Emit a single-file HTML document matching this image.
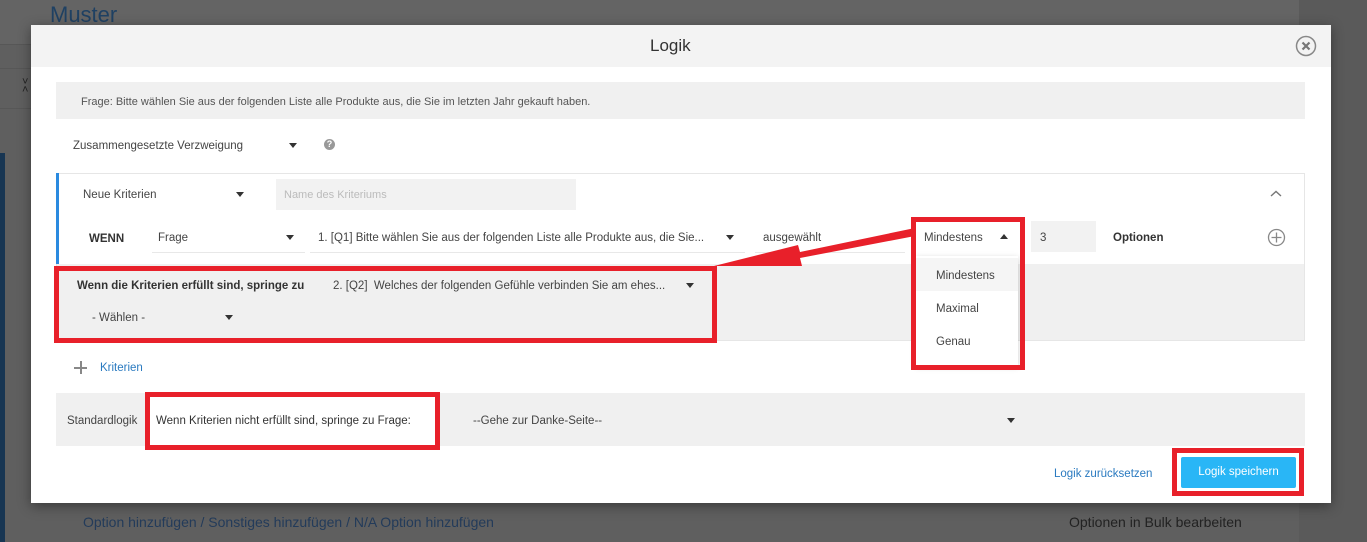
<!DOCTYPE html>
<html><head><meta charset="utf-8">
<style>
*{margin:0;padding:0;box-sizing:border-box}
body{width:1367px;height:542px;overflow:hidden;background:#5f5f5f;position:relative;font-family:"Liberation Sans",sans-serif;font-size:11.5px;color:#444}
.a{position:absolute;white-space:nowrap}
.t{line-height:14px;transform:translateY(-6px)}
.car{position:absolute;width:0;height:0;border-left:4px solid transparent;border-right:4px solid transparent;border-top:5px solid #333}
.rb{position:absolute;border:5px solid #e8202a}
b{font-weight:bold;color:#333}
</style></head><body>
<!-- background page -->
<div class="a" style="left:0;top:0;width:1299px;height:44px;background:#646464"></div>
<div class="a" style="left:0;top:44px;width:1299px;height:1px;background:#575757"></div>
<div class="a" style="left:0;top:68px;width:1299px;height:1px;background:#575757"></div>
<div class="a" style="left:0;top:108px;width:1299px;height:1px;background:#575757"></div>
<div class="a" style="left:1299px;top:0;width:68px;height:542px;background:#5a5a5a"></div>
<div class="a" style="left:0;top:153px;width:5px;height:389px;background:#173552"></div>
<div class="a" style="left:50px;top:2px;font-size:22px;color:#1f4163">Muster</div>
<div class="a" style="left:22px;top:78px;font-size:11px;color:#222;line-height:8px">˅<br>˄</div>
<div class="a t" style="left:83px;top:521px;font-size:14px;color:#233b5a">Option hinzufügen / Sonstiges hinzufügen / N/A Option hinzufügen</div>
<div class="a t" style="left:1069px;top:521px;font-size:14px;color:#222">Optionen in Bulk bearbeiten</div>

<!-- modal -->
<div class="a" style="left:31px;top:25px;width:1300px;height:478px;background:#fff;box-shadow:0 3px 12px rgba(0,0,0,.4)"></div>
<div class="a" style="left:31px;top:25px;width:1300px;height:42px;background:#f3f3f3"></div>
<div class="a t" style="left:650px;top:46px;font-size:17px;color:#333;line-height:20px;transform:translateY(-10px)">Logik</div>
<svg class="a" style="left:1295px;top:35px" width="22" height="22" viewBox="0 0 22 22"><circle cx="11" cy="11" r="9.5" fill="none" stroke="#888" stroke-width="1.5"/><path d="M7.5 7.5l7 7M14.5 7.5l-7 7" stroke="#777" stroke-width="2.2"/></svg>

<div class="a" style="left:56px;top:82px;width:1249px;height:37px;background:#f0f0f0"></div>
<div class="a t" style="left:81px;top:101px;color:#555;font-size:11px">Frage: Bitte wählen Sie aus der folgenden Liste alle Produkte aus, die Sie im letzten Jahr gekauft haben.</div>

<div class="a t" style="left:73px;top:145px">Zusammengesetzte Verzweigung</div>
<div class="car" style="left:289px;top:143px"></div>
<div class="a" style="left:324px;top:139px;width:11px;height:11px;border-radius:50%;background:#999;color:#fff;font-size:9px;font-weight:bold;text-align:center;line-height:11px">?</div>

<!-- criteria box -->
<div class="a" style="left:56px;top:173px;width:1249px;height:168px;border:1px solid #e6e6e6"></div>
<div class="a" style="left:56px;top:173px;width:3px;height:91px;background:#2a8ae0"></div>
<div class="a t" style="left:83px;top:194px">Neue Kriterien</div>
<div class="car" style="left:236px;top:192px"></div>
<div class="a" style="left:276px;top:179px;width:300px;height:31px;background:#f2f2f2"></div>
<div class="a t" style="left:284px;top:194px;color:#bbb;font-size:11px">Name des Kriteriums</div>
<svg class="a" style="left:1270px;top:190px" width="12" height="8"><path d="M1 6l5-4.5 5 4.5" fill="none" stroke="#777" stroke-width="1.4"/></svg>

<div class="a t" style="left:89px;top:238px"><b>WENN</b></div>
<div class="a t" style="left:158px;top:237px">Frage</div>
<div class="car" style="left:286px;top:235px"></div>
<div class="a" style="left:152px;top:252px;width:153px;height:1px;background:#e8e8e8"></div>
<div class="a t" style="left:318px;top:237px">1. [Q1] Bitte wählen Sie aus der folgenden Liste alle Produkte aus, die Sie...</div>
<div class="car" style="left:726px;top:235px"></div>
<div class="a" style="left:310px;top:252px;width:435px;height:1px;background:#e8e8e8"></div>
<div class="a t" style="left:763px;top:237px">ausgewählt</div>
<div class="a" style="left:755px;top:252px;width:150px;height:1px;background:#e8e8e8"></div>
<div class="a t" style="left:924px;top:237px">Mindestens</div>
<div class="car" style="left:1000px;top:234px;border-top:0;border-bottom:5px solid #333"></div>
<div class="a" style="left:1031px;top:221px;width:65px;height:31px;background:#f2f2f2"></div>
<div class="a t" style="left:1040px;top:237px">3</div>
<div class="a t" style="left:1113px;top:237px"><b>Optionen</b></div>
<svg class="a" style="left:1267px;top:228px" width="19" height="19"><circle cx="9.5" cy="9.5" r="8" fill="none" stroke="#888" stroke-width="1.3"/><path d="M9.5 4.5v10M4.5 9.5h10" stroke="#888" stroke-width="1.3"/></svg>

<div class="a" style="left:57px;top:264px;width:1247px;height:76px;background:#f0f0f0"></div>
<div class="a t" style="left:77px;top:285px"><b>Wenn die Kriterien erfüllt sind, springe zu</b></div>
<div class="a t" style="left:333px;top:285px">2. [Q2]&nbsp; Welches der folgenden Gefühle verbinden Sie am ehes...</div>
<div class="car" style="left:686px;top:283px"></div>
<div class="a t" style="left:92px;top:317px">- Wählen -</div>
<div class="car" style="left:225px;top:315px"></div>
<div class="rb" style="left:54px;top:266px;width:663px;height:77px"></div>

<!-- dropdown -->
<div class="a" style="left:916px;top:256px;width:102px;height:109px;background:#fff;box-shadow:0 2px 6px rgba(0,0,0,.2)"></div>
<div class="a" style="left:916px;top:258px;width:102px;height:33px;background:#f5f5f5"></div>
<div class="a t" style="left:936px;top:275px">Mindestens</div>
<div class="a t" style="left:936px;top:308px">Maximal</div>
<div class="a t" style="left:936px;top:341px">Genau</div>
<div class="rb" style="left:911px;top:217px;width:114px;height:153px"></div>
<svg class="a" style="left:700px;top:220px" width="220" height="60"><polygon points="215,8 215,16 100,38 102,46 14,46 98,25 100,32" fill="#e8202a"/></svg>

<div class="a" style="left:74px;top:367px;width:13px;height:1.5px;background:#888"></div>
<div class="a" style="left:80px;top:361px;width:1.5px;height:13px;background:#888"></div>
<div class="a t" style="left:100px;top:367px;color:#2a7ac0">Kriterien</div>

<div class="a" style="left:56px;top:393px;width:1249px;height:53px;background:#f0f0f0"></div>
<div class="a t" style="left:67px;top:420px">Standardlogik</div>
<div class="a" style="left:150px;top:397px;width:285px;height:48px;background:#fff"></div>
<div class="rb" style="left:145px;top:392px;width:295px;height:58px"></div>
<div class="a t" style="left:156px;top:420px;color:#333">Wenn Kriterien nicht erfüllt sind, springe zu Frage:</div>
<div class="a t" style="left:473px;top:420px">--Gehe zur Danke-Seite--</div>
<div class="car" style="left:1007px;top:418px"></div>

<div class="a t" style="left:1054px;top:473px;color:#2a7ac0">Logik zurücksetzen</div>
<div class="a" style="left:1181px;top:457px;width:115px;height:31px;background:#29b6f6;border-radius:2px;color:#fff;text-align:center;line-height:31px">Logik speichern</div>
<div class="rb" style="left:1172px;top:448px;width:132px;height:48px"></div>
</body></html>
